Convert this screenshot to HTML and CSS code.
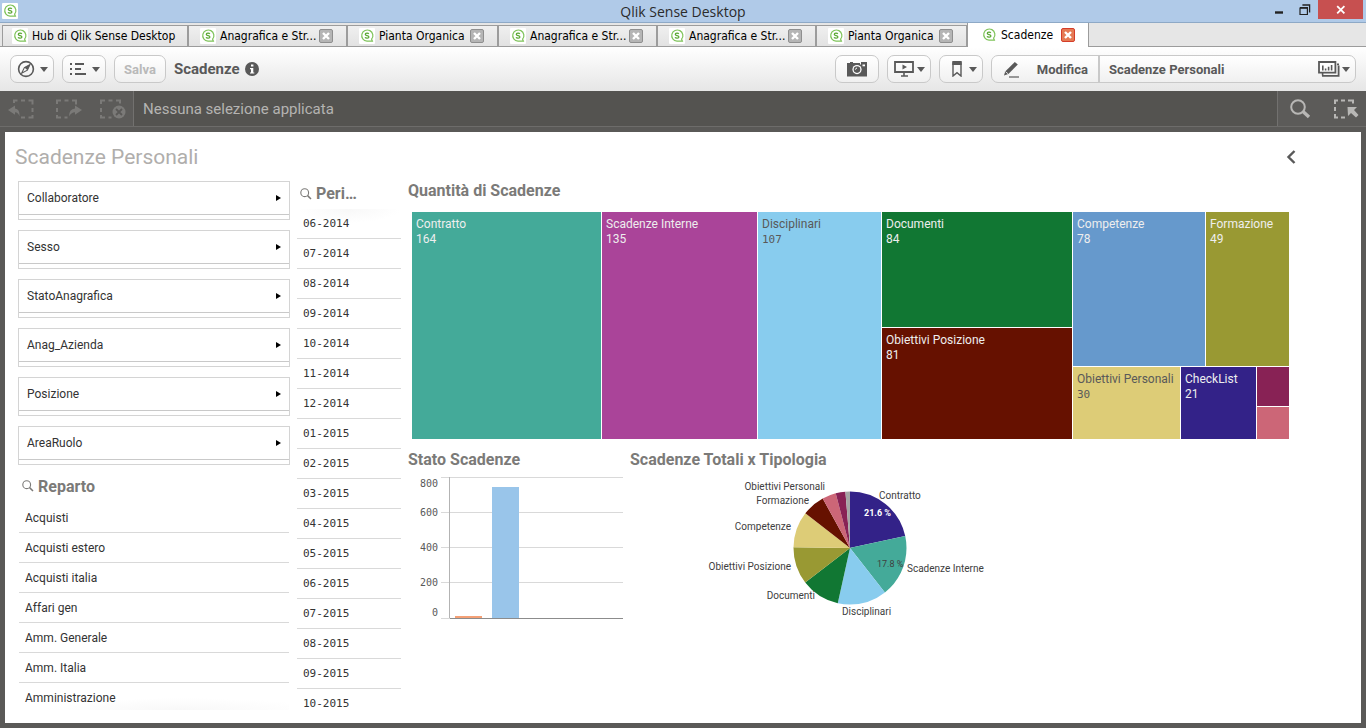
FILE: index.html
```html
<!DOCTYPE html>
<html lang="it">
<head>
<meta charset="utf-8">
<title>Qlik Sense Desktop</title>
<link rel="stylesheet" href="styles.css">
</head>
<body>
<svg class="defs" width="0" height="0" aria-hidden="true">
  <symbol id="logo" viewBox="0 0 16 16">
    <rect width="16" height="16" rx="1" fill="#fff"/>
    <path d="M12.6 11.2A5.6 5.6 0 1 0 8 13.2h5.4z" fill="none" stroke="#7fc35a" stroke-width="1.2"/>
    <path d="M9.8 5.9C9.2 4.9 6.3 4.9 6.3 6.4C6.3 8 9.9 7.2 9.9 8.9C9.9 10.5 6.8 10.4 6 9.4" fill="none" stroke="#5aa832" stroke-width="1.3"/>
  </symbol>
  <symbol id="cross" viewBox="0 0 14 14">
    <rect class="x-box" x="0.5" y="0.5" width="13" height="13" rx="1.5"/>
    <path d="M4 4l6 6M10 4l-6 6" stroke="#fff" stroke-width="2.4"/>
  </symbol>
  <symbol id="lens" viewBox="0 0 12 12">
    <circle cx="4.7" cy="4.7" r="3.9" fill="none" stroke="#7b7a78" stroke-width="1.1"/>
    <path d="M7.6 7.6l3.4 3.4" stroke="#7b7a78" stroke-width="1.5"/>
  </symbol>
  <symbol id="caret" viewBox="0 0 8 5"><path d="M0 0h8L4 5z" fill="#595959"/></symbol>
  <symbol id="arrow" viewBox="0 0 5 8"><path d="M0 1L5 4L0 7z" fill="#000"/></symbol>
</svg>

<header class="titlebar">
  <svg class="app-icon" width="16" height="16"><use href="#logo"/></svg>
  <h1 class="app-title">Qlik Sense Desktop</h1>
  <div class="window-controls">
    <button class="win-btn" aria-label="Riduci a icona"><svg width="10" height="10"><path d="M1 7.5h8" stroke="#222" stroke-width="2.4"/></svg></button>
    <button class="win-btn" aria-label="Ripristina"><svg width="12" height="12"><path d="M1 4.2h7.4v6.3H1z" fill="none" stroke="#222" stroke-width="1.2"/><path d="M1 3.6h8M3.4 1h7.2v7.4" fill="none" stroke="#222" stroke-width="1.3"/></svg></button>
    <button class="win-btn win-close" aria-label="Chiudi"><svg width="10" height="10"><path d="M1.2 1.2l7.2 7.2M8.4 1.2l-7.2 7.2" stroke="#fff" stroke-width="1.8"/></svg></button>
  </div>
</header>

<nav class="tabs">
  <div class="tab tab-hub"><button class="tab-label"><svg width="16" height="16"><use href="#logo"/></svg>Hub di Qlik Sense Desktop</button></div>
  <div class="tab tab-long"><button class="tab-label"><svg width="16" height="16"><use href="#logo"/></svg>Anagrafica e Str...</button><button class="tab-close" aria-label="Chiudi scheda"><svg width="14" height="14"><use href="#cross"/></svg></button></div>
  <div class="tab"><button class="tab-label"><svg width="16" height="16"><use href="#logo"/></svg>Pianta Organica</button><button class="tab-close" aria-label="Chiudi scheda"><svg width="14" height="14"><use href="#cross"/></svg></button></div>
  <div class="tab tab-long"><button class="tab-label"><svg width="16" height="16"><use href="#logo"/></svg>Anagrafica e Str...</button><button class="tab-close" aria-label="Chiudi scheda"><svg width="14" height="14"><use href="#cross"/></svg></button></div>
  <div class="tab tab-long"><button class="tab-label"><svg width="16" height="16"><use href="#logo"/></svg>Anagrafica e Str...</button><button class="tab-close" aria-label="Chiudi scheda"><svg width="14" height="14"><use href="#cross"/></svg></button></div>
  <div class="tab"><button class="tab-label"><svg width="16" height="16"><use href="#logo"/></svg>Pianta Organica</button><button class="tab-close" aria-label="Chiudi scheda"><svg width="14" height="14"><use href="#cross"/></svg></button></div>
  <div class="tab tab-active"><button class="tab-label"><svg width="16" height="16"><use href="#logo"/></svg>Scadenze</button><button class="tab-close" aria-label="Chiudi scheda"><svg width="14" height="14"><use href="#cross"/></svg></button></div>
</nav>

<div class="toolbar">
  <button class="btn btn-icon" aria-label="Navigazione">
    <svg width="18" height="18"><circle cx="9" cy="9" r="7.4" fill="none" stroke="#595959" stroke-width="1.6"/><path d="M13 4.6L10.4 10.2L4.6 13.2L7.4 7.6z" fill="none" stroke="#595959" stroke-width="1.1"/><path d="M13 4.6L10.4 10.2L7.4 7.6z" fill="#595959"/></svg>
    <svg width="8" height="5"><use href="#caret"/></svg>
  </button>
  <button class="btn btn-icon" aria-label="Menu">
    <svg width="18" height="14"><path d="M1 2h2M6 2h9M1 7h2M6 7h6M1 12h2M6 12h11" stroke="#595959" stroke-width="2"/></svg>
    <svg width="8" height="5"><use href="#caret"/></svg>
  </button>
  <button class="btn btn-save" disabled>Salva</button>
  <h2 class="doc-title">Scadenze</h2>
  <svg class="info" width="14" height="14"><circle cx="7" cy="7" r="7" fill="#595959"/><path d="M6 2.6h2.4v2H6zM5 6h3.3v4.4h1v1.2H5v-1.2h1V7.2H5z" fill="#fff"/></svg>
  <div class="spacer"></div>
  <button class="btn btn-icon" aria-label="Istantanee">
    <svg width="20" height="16"><path d="M0 2h3V1h3v1h7v1.400h1V1h6v14.500H0z" fill="#595959"/><circle cx="10" cy="8.600" r="4.600" fill="#fff"/><circle cx="10" cy="8.600" r="3.300" fill="#595959"/><path d="M8.400 8.600A1.800 1.800 0 0 1 10 7" stroke="#fff" fill="none"/><path d="M15.500 3.500h2.500v1.800h-2.500z" fill="#fff"/></svg>
  </button>
  <button class="btn btn-icon btn-tight" aria-label="Racconti">
    <svg width="20" height="16"><path d="M1 1h18v10H1z" fill="none" stroke="#595959" stroke-width="1.800"/><path d="M8.500 3.400l4.500 2.600-4.500 2.600z" fill="#595959"/><path d="M10 11v4M7 15h7" stroke="#595959" stroke-width="1.600"/></svg>
    <svg width="8" height="5"><use href="#caret"/></svg>
  </button>
  <button class="btn btn-icon btn-mark" aria-label="Segnalibri">
    <svg width="12" height="16"><path d="M2 2v13l4-3.4 4 3.4V2z" fill="none" stroke="#595959" stroke-width="1.4"/><path d="M1.3 0h9.4v4H1.3z" fill="#595959"/></svg>
    <svg width="8" height="5"><use href="#caret"/></svg>
  </button>
  <div class="btn-group">
    <button class="btn-edit">
      <svg width="17" height="17"><path d="M1 14.5L2.2 10.600L11.800 1l3 2.4L5.4 12.9z" fill="#595959"/><path d="M2.4 10.6l2.8 2.300" stroke="#fff" stroke-width="0.8"/><path d="M6 16h10" stroke="#595959" stroke-width="1.2"/></svg>
      Modifica
    </button>
    <button class="btn-sheet">
      <span class="sheet-name">Scadenze Personali</span>
      <svg width="22" height="16"><path d="M4 14.8h16.6V4.4" fill="none" stroke="#595959" stroke-width="1.8"/><path d="M1 1h16.4v10.6H1z" fill="#fff" stroke="#595959" stroke-width="1.8"/><path d="M19 3.4h2M4.6 14.5v-3" stroke="#595959" stroke-width="1.6"/><path d="M4.8 9.4V4.6M7.6 9.4V7.4M10.6 9.4V5.8M13.6 9.4V4" stroke="#595959" stroke-width="1.6"/></svg>
      <svg width="8" height="5"><use href="#caret"/></svg>
    </button>
  </div>
</div>

<div class="selections">
  <div class="sel-tools">
    <button class="sel-btn" aria-label="Indietro"><svg width="28" height="20"><path d="M6 4V1.5h3.5M13 1.5h4M20.500 1.500h4v4M24.500 9v4M24.500 16v2.500h-4M17 18.500h-4" fill="none" stroke="#7b7a78" stroke-width="2"/><path d="M0 11L7 6.500V9.500Q12 10 11.500 17.500Q10.500 13.500 7 13.300V15.800z" fill="#7b7a78"/></svg></button>
    <button class="sel-btn" aria-label="Avanti"><svg width="28" height="20"><path d="M3 5V1.500h4M10.500 1.500h4M18 1.500h4v4M3 9v4M3 16v2.500h4M10.500 18.500h3" fill="none" stroke="#7b7a78" stroke-width="2"/><path d="M28 11L21 6.500V9.500Q15 10 15 17.500Q17 13.500 21 13.300V15.800z" fill="#7b7a78"/></svg></button>
    <button class="sel-btn" aria-label="Annulla selezioni"><svg width="28" height="20"><path d="M1 5V1.500h4M8.500 1.500h4M16 1.500h4v3M1 9v4M1 16v2.500h4M8.500 18.500h3" fill="none" stroke="#7b7a78" stroke-width="2"/><circle cx="19" cy="13" r="6.500" fill="#7b7a78"/><path d="M16 10l6 6M22 10l-6 6" stroke="#5a5957" stroke-width="1.8"/></svg></button>
  </div>
  <p class="sel-text">Nessuna selezione applicata</p>
  <div class="sel-actions">
    <button class="sel-btn" aria-label="Cerca"><svg width="22" height="20"><circle cx="9" cy="8" r="6.800" fill="none" stroke="#b8b7b5" stroke-width="2"/><path d="M14 12.500l6 5.500" stroke="#b8b7b5" stroke-width="3.400"/></svg></button>
    <button class="sel-btn" aria-label="Strumento di selezione"><svg width="26" height="20"><path d="M2 5V1.500h3M8 1.500h4M15 1.500h5v3M2 8v4M2 15v3.500h3M8 18.500h4" fill="none" stroke="#b8b7b5" stroke-width="2"/><path d="M14.500 8H24l-3 3 4.500 5-2.500 2.500-5-4.500-3 3z" fill="#b8b7b5"/></svg></button>
  </div>
</div>

<main class="sheet">
  <div class="sheet-head">
    <h2 class="sheet-title">Scadenze Personali</h2>
    <button class="sheet-prev" aria-label="Foglio precedente"><svg width="10" height="14"><path d="M8.500 1L2.500 7l6 6" fill="none" stroke="#595959" stroke-width="2.400"/></svg></button>
  </div>
  <div class="sheet-body">
    <div class="filters">
      <div class="filter-boxes">
        <button class="filter">Collaboratore<svg width="5" height="8"><use href="#arrow"/></svg></button>
        <button class="filter">Sesso<svg width="5" height="8"><use href="#arrow"/></svg></button>
        <button class="filter">StatoAnagrafica<svg width="5" height="8"><use href="#arrow"/></svg></button>
        <button class="filter">Anag_Azienda<svg width="5" height="8"><use href="#arrow"/></svg></button>
        <button class="filter">Posizione<svg width="5" height="8"><use href="#arrow"/></svg></button>
        <button class="filter">AreaRuolo<svg width="5" height="8"><use href="#arrow"/></svg></button>
      </div>
      <h3 class="list-title reparto-title"><svg width="12" height="12"><use href="#lens"/></svg>Reparto</h3>
      <ul class="list fade-bottom">
        <li>Acquisti</li><li>Acquisti estero</li><li>Acquisti italia</li><li>Affari gen</li><li>Amm. Generale</li><li>Amm. Italia</li><li>Amministrazione</li>
      </ul>
    </div>

    <div class="period">
      <h3 class="list-title period-title"><svg width="12" height="12"><use href="#lens"/></svg>Peri…</h3>
      <ul class="list list-mono fade-top">
        <li>06-2014</li><li>07-2014</li><li>08-2014</li><li>09-2014</li><li>10-2014</li><li>11-2014</li><li>12-2014</li><li>01-2015</li><li>02-2015</li><li>03-2015</li><li>04-2015</li><li>05-2015</li><li>06-2015</li><li>07-2015</li><li>08-2015</li><li>09-2015</li><li>10-2015</li>
      </ul>
    </div>

    <div class="charts">
      <section>
        <h3 class="chart-title">Quantità di Scadenze</h3>
        <div class="treemap">
          <div class="tile contratto">Contratto<br>164</div>
          <div class="tile interne">Scadenze Interne<br>135</div>
          <div class="tile disciplinari on-light">Disciplinari<br><span class="num">107</span></div>
          <div class="tile-stack">
            <div class="tile documenti">Documenti<br>84</div>
            <div class="tile posizione">Obiettivi Posizione<br>81</div>
          </div>
          <div class="tile-block">
            <div class="tile competenze">Competenze<br>78</div>
            <div class="tile formazione">Formazione<br>49</div>
            <div class="tile personali on-light">Obiettivi Personali<br><span class="num">30</span></div>
            <div class="tile checklist">CheckList<br>21</div>
            <div class="tile-minor"><div class="minor-a"></div><div class="minor-b"></div></div>
          </div>
        </div>
      </section>
      <div class="chart-row">
        <section>
          <h3 class="chart-title">Stato Scadenze</h3>
          <svg class="bars" width="215" height="150" role="img" aria-label="Stato Scadenze">
            <path d="M33 4.500h182M33 39.500h182M33 74.500h182M33 109.500h182M33 145.500h9" stroke="#d9d9d9"/>
            <path d="M41.500 4v141" stroke="#b3b3b3"/>
            <rect x="47" y="143" width="27" height="2" fill="#f4a076"/>
            <rect x="84" y="14" width="27" height="131" fill="#99c5ea"/>
            <path d="M42 145.500h173" stroke="#8c8c8c"/>
            <text x="30" y="14">800</text><text x="30" y="43">600</text><text x="30" y="78">400</text><text x="30" y="113">200</text><text x="30" y="143">0</text>
          </svg>
        </section>
        <section>
          <h3 class="chart-title">Scadenze Totali x Tipologia</h3>
          <svg class="pie" width="440" height="150" role="img" aria-label="Scadenze Totali x Tipologia">
            <g class="slices" transform="rotate(-90 220 75)">
              <circle cx="220" cy="75" r="28" pathLength="759" stroke="#332288" stroke-dasharray="164 759"/>
              <circle cx="220" cy="75" r="28" pathLength="759" stroke="#44aa99" stroke-dasharray="135 759" stroke-dashoffset="-164"/>
              <circle cx="220" cy="75" r="28" pathLength="759" stroke="#88ccee" stroke-dasharray="107 759" stroke-dashoffset="-299"/>
              <circle cx="220" cy="75" r="28" pathLength="759" stroke="#117733" stroke-dasharray="84 759" stroke-dashoffset="-406"/>
              <circle cx="220" cy="75" r="28" pathLength="759" stroke="#999933" stroke-dasharray="81 759" stroke-dashoffset="-490"/>
              <circle cx="220" cy="75" r="28" pathLength="759" stroke="#ddcc77" stroke-dasharray="78 759" stroke-dashoffset="-571"/>
              <circle cx="220" cy="75" r="28" pathLength="759" stroke="#661100" stroke-dasharray="49 759" stroke-dashoffset="-649"/>
              <circle cx="220" cy="75" r="28" pathLength="759" stroke="#cc6677" stroke-dasharray="30 759" stroke-dashoffset="-698"/>
              <circle cx="220" cy="75" r="28" pathLength="759" stroke="#882255" stroke-dasharray="21 759" stroke-dashoffset="-728"/>
              <circle cx="220" cy="75" r="28" pathLength="759" stroke="#a5a5a5" stroke-dasharray="10 759" stroke-dashoffset="-749"/>
            </g>
            <g class="end">
              <text x="195" y="17">Obiettivi Personali</text>
              <text x="179" y="31">Formazione</text>
              <text x="161" y="57">Competenze</text>
              <text x="161" y="97">Obiettivi Posizione</text>
              <text x="185" y="126">Documenti</text>
            </g>
            <text x="249" y="26">Contratto</text>
            <text x="277" y="99">Scadenze Interne</text>
            <text x="212" y="142">Disciplinari</text>
            <text class="pct pct-light" x="234" y="43">21.6 %</text>
            <text class="pct" x="247" y="94">17.8 %</text>
          </svg>
        </section>
      </div>
    </div>
  </div>
</main>
</body>
</html>
```

FILE: styles.css
```css
* { box-sizing: border-box; }
body {
  margin: 0;
  height: 100vh;
  display: flex;
  flex-direction: column;
  overflow: hidden;
  background: #5a5957;
  color: #333;
  font-family: Roboto, "Liberation Sans", sans-serif;
  font-size: 12px;
}
button { font: inherit; color: inherit; background: none; border: 0; padding: 0; margin: 0; }
h1, h2, h3, p, ul { margin: 0; padding: 0; }
ul { list-style: none; }
svg { display: block; flex: none; }
.defs { position: absolute; }

/* Window title bar */
.titlebar {
  display: grid;
  grid-template-columns: 1fr auto 1fr;
  height: 23px;
  flex: none;
  background: #b0cae8;
  border-bottom: 1px solid #8ea9c6;
}
.app-icon { margin: 3px 2px; }
.app-title { font: 400 14px/23px "Open Sans", "Noto Sans", sans-serif; color: #2b2b2b; }
.window-controls { display: flex; justify-content: flex-end; padding-right: 3px; }
.win-btn { width: 26px; height: 19px; display: flex; align-items: center; justify-content: center; }
.win-btn.win-close { width: 45px; background: #c75050; }

/* Browser tabs */
.tabs {
  --x-fill: #b5b5b5;
  --x-line: #8f8f8f;
  display: flex;
  align-items: flex-end;
  height: 24px;
  flex: none;
  padding-left: 2px;
  background: linear-gradient(#e6e6e6, #e6e6e6 23px, #9c9c9c 23px);
  font: 12px "DejaVu Sans Condensed", "Noto Sans", sans-serif;
  color: #000;
}
.tab {
  display: flex;
  align-items: center;
  justify-content: space-between;
  width: 151px;
  height: 22px;
  padding: 0 13px 0 11px;
  background: linear-gradient(#f0f0f0, #e2e2e2);
  border: 1px solid #9c9c9c;
}
.tab-hub { width: 186px; padding: 0 9px; }
.tab-long { width: 159px; }
.tab-active {
  --x-fill: #e57a54;
  --x-line: #d43d2a;
  width: 122px;
  height: 24px;
  padding: 0 13px;
  background: #fff;
  border-bottom: 0;
  border-top: 0;
}
.tab-label { display: flex; align-items: center; gap: 4px; white-space: nowrap; }
.x-box { fill: var(--x-fill); stroke: var(--x-line); }

/* Toolbar */
.toolbar {
  display: flex;
  align-items: center;
  gap: 8px;
  height: 44px;
  flex: none;
  padding: 0 10px;
  background: linear-gradient(#fff, #e6e6e6);
  color: #595959;
  font-weight: 700;
  font-size: 13px;
}
.btn, .btn-group {
  height: 28px;
  border: 1px solid #c9c9c9;
  border-radius: 7px;
  background: linear-gradient(#fff, #f0f0f0);
  display: flex;
  align-items: center;
  justify-content: center;
}
.btn-icon { width: 44px; gap: 5px; }
.btn-tight { gap: 3px; }
.btn-mark { gap: 6px; padding-left: 6px; }
.btn-save { width: 52px; color: #b9b9b9; }
.doc-title { font-size: 15px; }
.info { margin-left: -3px; }
.spacer { flex: 1; }
.btn-group { width: 365px; align-items: stretch; }
.btn-edit { display: flex; align-items: center; justify-content: space-between; width: 108px; padding: 0 10px 0 11px; border-right: 2px solid #c9c9c9; }
.btn-sheet { flex: 1; display: flex; align-items: center; gap: 2px; padding: 0 5px 0 9px; }
.sheet-name { flex: 1; text-align: left; }

/* Selections bar */
.selections { display: flex; height: 36px; flex: none; background: #545350; border-bottom: 1px solid #6d6c6a; }
.sel-tools { display: flex; align-items: center; gap: 18px; width: 134px; padding-left: 8px; background: #5c5b59; border-right: 1px solid #72716f; }
.sel-text { flex: 1; padding-left: 9px; color: #b5b4b2; font-size: 15px; line-height: 36px; }
.sel-actions { display: flex; align-items: center; gap: 22px; width: 89px; padding-left: 11px; background: #5c5b59; border-left: 1px solid #72716f; }

/* Sheet */
.sheet { flex: 1; min-height: 0; margin: 5px; display: flex; flex-direction: column; background: #fff; padding: 0 72px 3px 13px; }
.sheet-head { display: flex; align-items: center; justify-content: space-between; height: 46px; flex: none; margin-left: -3px; padding-top: 3px; }
.sheet-title { font-size: 21px; font-weight: 400; color: #b0aeac; }
.sheet-prev { margin-right: -7px; }
.sheet-body { flex: 1; min-height: 0; display: grid; grid-template-columns: 272fr 104fr 881fr; grid-template-rows: minmax(0, 1fr); gap: 7px; }
.filters, .period { display: flex; flex-direction: column; min-height: 0; min-width: 0; }
.filters { padding-bottom: 10px; }
.filter-boxes { display: flex; flex-direction: column; gap: 10px; padding-top: 3px; }
.filter {
  display: flex;
  align-items: center;
  justify-content: space-between;
  height: 39px;
  padding: 0 8px 6px;
  border: 1px solid #d4d4d4;
  background: linear-gradient(#fff 32px, #c9c9c9 32px, #c9c9c9 33px, #fff 33px);
}
.list-title { display: flex; align-items: center; gap: 4px; font-size: 16px; font-weight: 700; color: #7b7a78; flex: none; }
.reparto-title { height: 38px; padding: 4px 0 0 4px; }
.period-title { height: 31px; padding-left: 3px; }
.list { flex: 1; min-height: 0; overflow: hidden; }
.list li { height: 30px; padding: 0 6px; line-height: 30px; border-bottom: 1px solid #d9d9d9; }
.list li:last-child { border-bottom: 0; }
.filters .list { margin: 0 1px; }
.list-mono { font-family: "DejaVu Sans Mono", monospace; font-size: 11px; }
.fade-bottom { background: radial-gradient(ellipse at 60% 100%, #f8f8f8, #fff 60%) bottom / 100% 14px no-repeat; }
.fade-top { background: radial-gradient(ellipse at 50% 0, #f8f8f8, #fff 70%) top / 100% 14px no-repeat; }

/* Charts */
.chart-title { font-size: 16px; font-weight: 700; line-height: 26px; color: #7b7a78; }
.treemap { display: grid; grid-template-columns: 189fr 155fr 123fr 190fr 216fr; gap: 1px; height: 227px; margin: 8px 0 8px 4px; }
.tile { padding: 5px 4px; line-height: 15px; color: #eee; white-space: nowrap; overflow: hidden; font-size: 12px; }
.on-light { color: #595959; }
.num { font-family: "DejaVu Sans Mono", monospace; font-size: 11px; }
.contratto { background: #44aa99; }
.interne { background: #aa4499; }
.disciplinari { background: #88ccee; }
.tile-stack { display: grid; grid-template-rows: 115fr 111fr; gap: 1px; }
.documenti { background: #117733; }
.posizione { background: #661100; }
.tile-block { display: grid; grid-template-columns: 107fr 24fr 50fr 32fr; grid-template-rows: 153fr 72fr; gap: 1px; }
.competenze { grid-column: 1 / 3; background: #6699cc; }
.formazione { grid-column: 3 / 5; background: #999933; }
.personali { background: #ddcc77; }
.checklist { grid-column: 2 / 4; background: #332288; }
.tile-minor { display: grid; grid-template-rows: 39fr 32fr; gap: 1px; }
.minor-a { background: #882255; }
.minor-b { background: #cc6677; }
.chart-row { display: grid; grid-template-columns: 215px 1fr; gap: 7px; }
.bars text { font: 10px "DejaVu Sans Mono", monospace; fill: #595959; text-anchor: end; }
.slices circle { fill: none; stroke-width: 57; }
.pie text { font-size: 10px; fill: #404040; }
.pie .end text { text-anchor: end; }
.pie .pct { font-size: 9px; }
.pie .pct-light { fill: #fff; font-weight: 700; }
```
